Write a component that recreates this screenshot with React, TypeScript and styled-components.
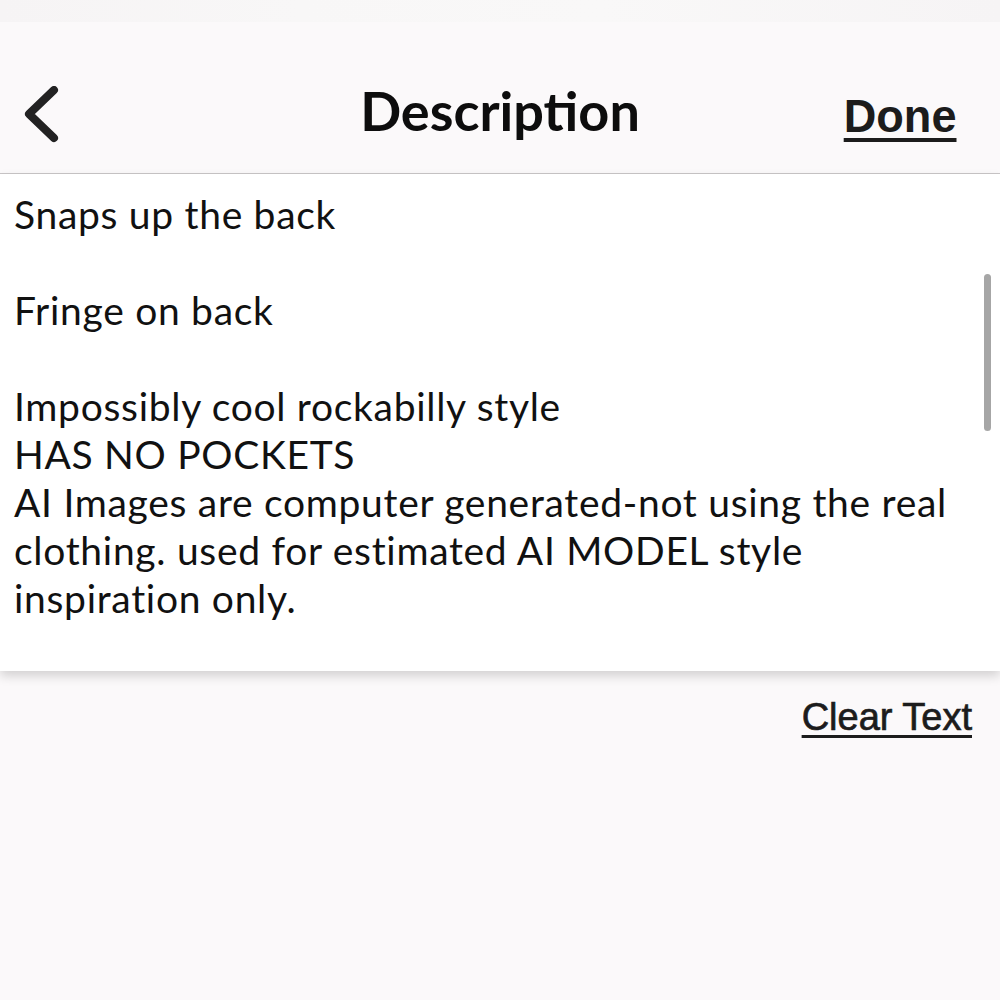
import React from "react";
import styled, { createGlobalStyle } from "styled-components";

const Global = createGlobalStyle`
  html, body { margin: 0; padding: 0; background: #fbf9fa; }
  body { width: 1000px; height: 1000px; overflow: hidden; font-family: Lato, "Noto Sans", sans-serif; color: #111; }
`;

const Screen = styled.div`
  width: 1000px;
  height: 1000px;
  display: flex;
  flex-direction: column;
  background: #fbf9fa;
`;

const StatusStrip = styled.div`
  height: 22px;
  background: linear-gradient(90deg, #f6f4f5 0%, #f8f7f7 30%, #f9f8f8 60%, #f6f4f5 100%);
`;

const Header = styled.header`
  height: 152px;
  display: grid;
  grid-template-columns: 160px 1fr 160px;
  align-items: start;
  padding: 0 14px;
  border-bottom: 1.5px solid #c9c6c7;
  box-sizing: border-box;
`;

const BackButton = styled.button`
  background: none;
  border: 0;
  padding: 0;
  margin-top: 64px;
  width: 50px;
  height: 60px;
  display: flex;
  cursor: pointer;
`;

const Title = styled.h1`
  margin: 59px 0 0;
  text-align: center;
  font-family: Lato, sans-serif;
  font-weight: 700;
  font-size: 54px;
  line-height: 60px;
  color: #0d0d0d;
`;

const LinkButton = styled.button<{ $size: number }>`
  background: none;
  border: 0;
  padding: 0;
  justify-self: end;
  font-family: "Liberation Sans", Arial, sans-serif;
  font-weight: 700;
  font-size: ${(p) => p.$size}px;
  color: #1c1c1c;
  text-decoration: underline;
  cursor: pointer;
`;

const DoneButton = styled(LinkButton)`
  margin: 64px 30px 0 0;
  line-height: 60px;
  text-decoration-thickness: 4px;
  text-underline-offset: 6px;
  transform: scaleX(0.96);
  transform-origin: right center;
`;

const Editor = styled.div`
  position: relative;
  height: 497px;
  background: #ffffff;
  box-shadow: 0 5px 10px rgba(0, 0, 0, 0.16);
  padding: 0 14px;
  box-sizing: border-box;
`;

const Text = styled.div`
  padding-top: 16px;
  font-family: Lato, "Noto Sans", sans-serif;
  font-size: 39px;
  letter-spacing: 0.7px;
  line-height: 48px;
  color: #111;
  white-space: pre-wrap;
`;

const ScrollThumb = styled.div`
  position: absolute;
  right: 9px;
  top: 100px;
  width: 7px;
  height: 157px;
  border-radius: 4px;
  background: #a6a6a6;
`;

const Footer = styled.div`
  display: flex;
  justify-content: flex-end;
  padding: 22px 28px 0 0;
`;

const ClearButton = styled(LinkButton)`
  font-weight: 400;
  line-height: 48px;
  -webkit-text-stroke: 0.7px #1c1c1c;
  text-decoration-thickness: 3px;
  text-underline-offset: 5px;
`;

const lines = [
  "Snaps up the back",
  "",
  "Fringe on back",
  "",
  "Impossibly cool rockabilly style",
  "HAS NO POCKETS",
  "AI Images are computer generated-not using the real",
  "clothing. used for estimated AI MODEL style",
  "inspiration only.",
];

export default function App() {
  return (
    <Screen>
      <Global />
      <StatusStrip />
      <Header>
        <BackButton aria-label="Back">
          <svg width="50" height="60" viewBox="0 0 50 60">
            <path
              d="M40 4 L15 28 L40 52"
              fill="none"
              stroke="#222"
              strokeWidth="8"
              strokeLinecap="round"
              strokeLinejoin="round"
            />
          </svg>
        </BackButton>
        <Title>Description</Title>
        <DoneButton $size={47}>Done</DoneButton>
      </Header>
      <Editor>
        <Text>{lines.join("\n")}</Text>
        <ScrollThumb />
      </Editor>
      <Footer>
        <ClearButton $size={38}>Clear Text</ClearButton>
      </Footer>
    </Screen>
  );
}
